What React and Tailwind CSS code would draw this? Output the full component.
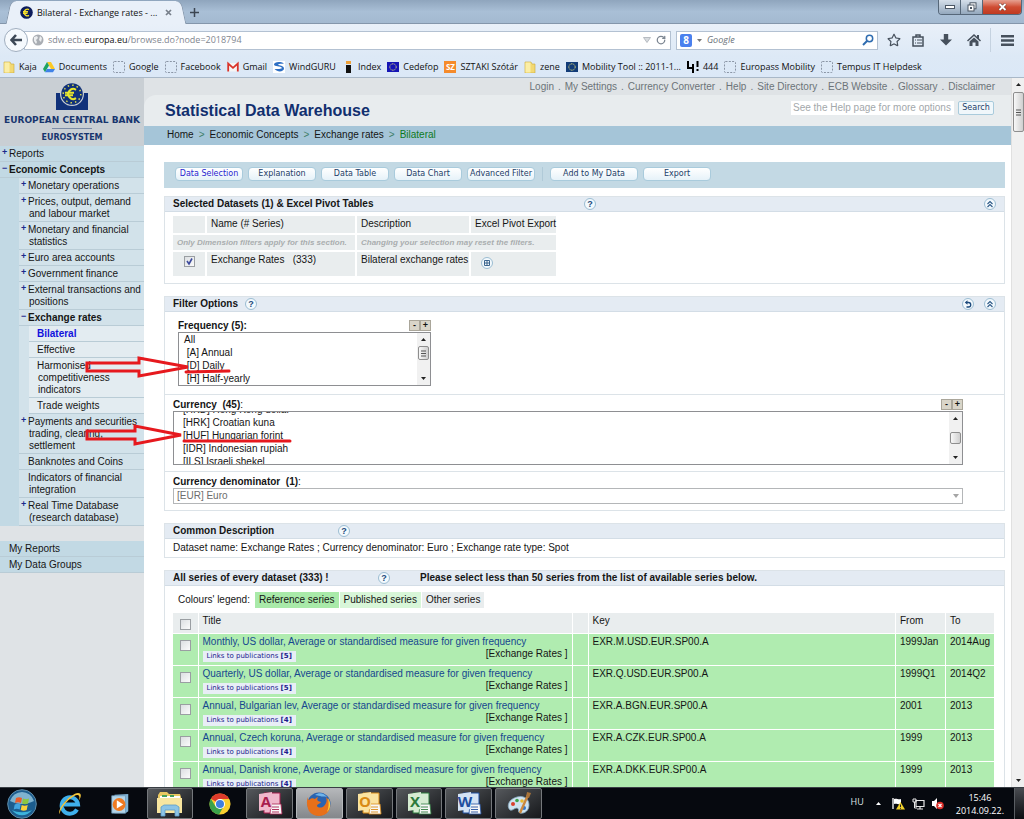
import { useEffect, useRef } from 'react'
import { FaRegStar } from 'react-icons/fa'
import { RotateCw } from 'lucide-react'

const topLinks = ['Login', 'My Settings', 'Currency Converter', 'Help', 'Site Directory', 'ECB Website', 'Glossary', 'Disclaimer']

const topics = [
  { sign: '+', lines: ['Monetary operations'] },
  { sign: '+', lines: ['Prices, output, demand', 'and labour market'] },
  { sign: '+', lines: ['Monetary and financial', 'statistics'] },
  { sign: '+', lines: ['Euro area accounts'] },
  { sign: '+', lines: ['Government finance'] },
  { sign: '+', lines: ['External transactions and', 'positions'] },
  {
    sign: '−',
    lines: ['Exchange rates'],
    open: true,
    children: [['Bilateral'], ['Effective'], ['Harmonised', 'competitiveness', 'indicators'], ['Trade weights']],
  },
  { sign: '+', lines: ['Payments and securities', 'trading, clearing,', 'settlement'] },
  { sign: '', lines: ['Banknotes and Coins'] },
  { sign: '', lines: ['Indicators of financial', 'integration'] },
  { sign: '+', lines: ['Real Time Database', '(research database)'] },
]

const series = [
  { title: 'Monthly, US dollar, Average or standardised measure for given frequency', links: 5, key: 'EXR.M.USD.EUR.SP00.A', from: '1999Jan', to: '2014Aug' },
  { title: 'Quarterly, US dollar, Average or standardised measure for given frequency', links: 5, key: 'EXR.Q.USD.EUR.SP00.A', from: '1999Q1', to: '2014Q2' },
  { title: 'Annual, Bulgarian lev, Average or standardised measure for given frequency', links: 4, key: 'EXR.A.BGN.EUR.SP00.A', from: '2001', to: '2013' },
  { title: 'Annual, Czech koruna, Average or standardised measure for given frequency', links: 4, key: 'EXR.A.CZK.EUR.SP00.A', from: '1999', to: '2013' },
  { title: 'Annual, Danish krone, Average or standardised measure for given frequency', links: 4, key: 'EXR.A.DKK.EUR.SP00.A', from: '1999', to: '2013' },
]

const frequencies = ['All', '\u00a0[A] Annual', '\u00a0[D] Daily', '\u00a0[H] Half-yearly', '\u00a0[M] Monthly', '\u00a0[Q] Quarterly']
const currencies = ['[HKD] Hong Kong dollar', '[HRK] Croatian kuna', '[HUF] Hungarian forint', '[IDR] Indonesian rupiah', '[ILS] Israeli shekel', '[INR] Indian rupee', '[ISK] Iceland krona']

/* ---------- browser chrome ---------- */

function FolderIcon() {
  return (
    <svg viewBox="0 0 12 12" className="size-3 shrink-0">
      <path d="M1 1h6l1 2h3v9H1z" fill="#f3d973" stroke="#c9a93b" strokeWidth=".6" />
      <path d="M1.5 1.5h5v10h-5z" fill="#fbeea6" />
    </svg>
  )
}

function BlankIcon() {
  return (
    <svg viewBox="0 0 12 12" className="size-3 shrink-0">
      <rect x=".5" y=".5" width="11" height="11" rx="1" fill="none" stroke="#8a95a5" strokeDasharray="2 1.3" />
    </svg>
  )
}

function DriveIcon() {
  return (
    <svg viewBox="0 0 12 12" className="size-3 shrink-0">
      <path d="M4 1h4l4 7H8z" fill="#fbc926" />
      <path d="M4 1 0 8l2 3.3L6 4.5z" fill="#1ea362" />
      <path d="M4 8h8l-2 3.3H2z" fill="#3f82e8" />
    </svg>
  )
}

function GmailIcon() {
  return (
    <svg viewBox="0 0 12 12" className="size-3 shrink-0">
      <path d="M1 2h10v8.5H1z" fill="#f5f5f5" />
      <path d="M1.2 10.5v-8L6 6.8l4.8-4.3v8" fill="none" stroke="#d9342b" strokeWidth="1.8" />
    </svg>
  )
}

function GuruIcon() {
  return (
    <svg viewBox="0 0 12 12" className="size-3 shrink-0">
      <path d="M0 0h12v12H0z" fill="#fff" />
      <path d="M11 2.5C7 0 1 1 1 3.6 1 6 8 5 9 7c0 1-5 1-7.500 1C5 12 11 10.500 11 7.500 11 4.500 6 5 5 3.600 6 2.600 9 3 11 2.500z" fill="#2d6fc4" />
    </svg>
  )
}

function IndexIcon() {
  return (
    <svg viewBox="0 0 12 12" className="size-3 shrink-0">
      <path d="M4 0h5v3H4z" fill="#f0a23a" />
      <path d="M4 4h5v8H4z" fill="#111" />
    </svg>
  )
}

function EuFlagIcon({ blue = '#1515b5' }) {
  return (
    <svg viewBox="0 0 12 12" className="size-3 shrink-0">
      <path d="M0 1h12v10H0z" fill={blue} />
      <circle cx="6" cy="6" r="3.200" fill="none" stroke="#e8e27a" strokeWidth="1" strokeDasharray="1 .7" />
    </svg>
  )
}

function SzIcon() {
  return <span className="flex size-3 shrink-0 items-center justify-center bg-[#f58b2c] text-[8px] leading-3 font-bold text-white">SZ</span>
}

function FourIcon() {
  return (
    <svg viewBox="0 0 12 12" className="size-3 shrink-0">
      <path d="M1 0v7h5M6 3v9M10.500 0v6M10.500 8v2" fill="none" stroke="#000" strokeWidth="2" />
    </svg>
  )
}

const bookmarks = [
  { icon: <FolderIcon />, label: 'Kaja' },
  { icon: <DriveIcon />, label: 'Documents' },
  { icon: <BlankIcon />, label: 'Google' },
  { icon: <BlankIcon />, label: 'Facebook' },
  { icon: <GmailIcon />, label: 'Gmail' },
  { icon: <GuruIcon />, label: 'WindGURU' },
  { icon: <IndexIcon />, label: 'Index' },
  { icon: <EuFlagIcon />, label: 'Cedefop' },
  { icon: <SzIcon />, label: 'SZTAKI Szótár' },
  { icon: <FolderIcon />, label: 'zene' },
  { icon: <EuFlagIcon blue="#123c78" />, label: 'Mobility Tool :: 2011-1...' },
  { icon: <FourIcon />, label: '444' },
  { icon: <BlankIcon />, label: 'Europass Mobility' },
  { icon: <BlankIcon />, label: 'Tempus IT Helpdesk' },
]

function TitleBar() {
  return (
    <div className="flex h-6 items-end justify-between bg-linear-to-b from-[#8fa5bd] via-[#a9bfd6] to-[#a3b9d0] border-b border-[#8496ab]">
      <div className="flex items-end">
        <div className="relative z-10 ml-3 -mb-px flex h-[23px] w-[168px] items-center gap-1 rounded-t-lg bg-[#e9f0f9] pl-2 before:absolute before:inset-y-0 before:-left-1 before:-z-10 before:w-6 before:-skew-x-12 before:rounded-tl-md before:border-l before:border-[#8496ab] before:bg-[#e9f0f9] after:absolute after:inset-y-0 after:-right-1 after:-z-10 after:w-6 after:skew-x-12 after:rounded-tr-md after:border-r after:border-[#8496ab] after:bg-[#e9f0f9]">
          <svg viewBox="0 0 13 13" className="size-[13px] shrink-0">
            <circle cx="6.500" cy="6.500" r="6.300" fill="#0c1c5c" />
            <path d="M9 3.600a3.300 3.300 0 1 0 0 5.800M3 5.700h5M3 7.400h4.500" fill="none" stroke="#f4de2c" strokeWidth="1.400" />
          </svg>
          <span className="flex-1 whitespace-nowrap text-[9px] text-[#111]">Bilateral - Exchange rates - ...</span>
          <button type="button" aria-label="Close tab" className="mr-2 size-[7px]">
            <svg viewBox="0 0 7 7" className="size-[7px]"><path d="M1 1l5 5M6 1 1 6" stroke="#777f8a" strokeWidth="1.700" /></svg>
          </button>
        </div>
        <button type="button" aria-label="New tab" className="mb-[6px] ml-[10px] size-[9px]">
          <svg viewBox="0 0 9 9" className="size-[9px]"><path d="M4.500 0v9M0 4.500h9" stroke="#3c4652" strokeWidth="1.500" /></svg>
        </button>
      </div>
      <div className="mr-[2px] flex h-[15px] self-start overflow-hidden rounded-b border border-t-0 border-[#566779]">
        <button type="button" aria-label="Minimize" className="flex w-[22px] items-center justify-center border-r border-[#566779] bg-linear-to-b from-[#d5dfea] to-[#94a8bd]">
          <svg viewBox="0 0 10 4" className="h-1 w-[10px]"><rect x=".5" y=".5" width="9" height="3" fill="#fff" stroke="#4a5664" /></svg>
        </button>
        <button type="button" aria-label="Restore" className="flex w-[22px] items-center justify-center border-r border-[#566779] bg-linear-to-b from-[#d5dfea] to-[#94a8bd]">
          <svg viewBox="0 0 10 10" className="size-[10px]">
            <rect x="3" y=".8" width="6" height="6" fill="#fff" stroke="#4a5664" />
            <rect x="1" y="3" width="6" height="6" fill="#fff" stroke="#4a5664" />
            <rect x="3" y="5" width="2" height="2" fill="#4a5664" />
          </svg>
        </button>
        <button type="button" aria-label="Close" className="flex w-[38px] items-center justify-center bg-linear-to-b from-[#e5a091] via-[#cf4c33] to-[#c03a20]">
          <svg viewBox="0 0 9 8" className="h-2 w-[9px]"><path d="M1.500 1l6 6M7.500 1l-6 6" stroke="#5b2a22" strokeWidth="3" /><path d="M1.500 1l6 6M7.500 1l-6 6" stroke="#fff" strokeWidth="2" /></svg>
        </button>
      </div>
    </div>
  )
}

function NavBar() {
  return (
    <div className="flex h-8 items-center bg-linear-to-b from-[#e9f0f9] to-[#dde9f6] pl-1">
      <button type="button" aria-label="Back" className="z-10 flex size-6 shrink-0 items-center justify-center rounded-full border border-[#a0aebf] bg-[#f5f9fd]">
        <svg viewBox="0 0 12 12" className="size-3"><path d="M6 1 1.500 6 6 11M2 6h10" fill="none" stroke="#3d4856" strokeWidth="2.600" /></svg>
      </button>
      <div className="-ml-1 flex h-[19px] flex-1 items-center border border-[#b3c1d2] bg-white pr-1 pl-[7px]">
        <svg viewBox="0 0 12 12" className="size-3 shrink-0">
          <circle cx="6" cy="6" r="5.500" fill="#a9adb3" />
          <path d="M2 3l3-1 1 2-2 2 1 2-1 2-2-3zM8 2l2 2-1 4-2-2z" fill="#eceef0" />
        </svg>
        <p className="ml-1 flex-1 text-[9px] text-[#7f868f]">sdw.ecb.<span className="text-[#111]">europa.eu</span>/browse.do?node=2018794</p>
        <svg viewBox="0 0 8 6" className="mr-[5px] h-[6px] w-2"><path d="M.5.500h7L4 5.500z" fill="#d8dce0" stroke="#a9afb6" strokeWidth=".8" /></svg>
        <RotateCw className="size-[10px] text-[#7b8591]" strokeWidth={3} />
      </div>
      <div className="ml-[5px] flex h-[19px] w-[202px] items-center border border-[#b3c1d2] bg-white px-[3px]">
        <span className="flex h-[13px] w-3 items-center justify-center rounded-xs bg-[#4a80ee] text-[10px] font-bold text-white">8</span>
        <svg viewBox="0 0 5 3" className="mx-[5px] h-[3px] w-[5px]"><path d="M0 0h5L2.500 3z" fill="#777" /></svg>
        <input aria-label="Search with Google" placeholder="Google" className="min-w-0 flex-1 text-[9px] italic placeholder:text-[#6c737b] outline-none" />
        <svg viewBox="0 0 12 12" className="size-3"><circle cx="7.500" cy="4.500" r="3.200" fill="none" stroke="#2f6cb0" strokeWidth="1.500" /><path d="M5 7 1 11" stroke="#2f6cb0" strokeWidth="2" /></svg>
      </div>
      <div className="flex items-center pl-[9px] text-[#46505c]">
        <FaRegStar className="size-[14px]" />
        <svg viewBox="0 0 12 13" className="ml-[11px] h-[13px] w-3">
          <path d="M1 3h10v9H1zM4 3V1h4v2" fill="none" stroke="currentColor" strokeWidth="1.500" />
          <path d="M3 6h1M5 6h5M3 9h1M5 9h5" stroke="currentColor" strokeWidth="1.200" />
        </svg>
        <svg viewBox="0 0 12 12" className="ml-4 size-3"><path d="M3.800 0h4.400v5.500H12l-6 6-6-6h3.800z" fill="currentColor" /></svg>
        <svg viewBox="0 0 14 12" className="ml-[15px] h-3 w-[14px]">
          <path d="M7 0 0 6.500l1 1L7 2l6 5.500 1-1-2-2V1h-2v1.700z" fill="currentColor" />
          <path d="M2.500 7.500 7 3.500l4.500 4V12h-3V8.500h-3V12h-3z" fill="currentColor" />
        </svg>
        <div className="ml-[9px] h-6 w-px bg-[#c5d2e0]" />
        <svg viewBox="0 0 13 11" className="mr-[10px] ml-[10px] h-[11px] w-[13px]"><path d="M0 1.300h13M0 5.500h13M0 9.700h13" stroke="currentColor" strokeWidth="2.400" /></svg>
      </div>
    </div>
  )
}

function BookmarkBar() {
  return (
    <nav className="flex h-[22px] items-center gap-[6px] border-b border-[#a9b8c8] bg-linear-to-b from-[#dde9f6] to-[#dbe8f7] pl-[3px]">
      {bookmarks.map((item) => (
        <a key={item.label} href="#" className="flex items-center gap-1 whitespace-nowrap text-[9px] text-[#111]">
          {item.icon}
          {item.label}
        </a>
      ))}
    </nav>
  )
}

/* ---------- page ---------- */

function EcbLogo() {
  return (
    <div className="flex h-[68px] flex-col items-center bg-[#c9cfd4] pt-1 font-['DejaVu_Sans'] text-[8px] text-[#17356e]">
      <svg viewBox="0 0 32 28" className="h-7 w-8 shrink-0">
        <path d="M0 11h32v17H0z" fill="#10317a" />
        <circle cx="16" cy="12" r="12" fill="#c9cfd4" />
        <circle cx="16" cy="12" r="10.800" fill="#10317a" />
        <circle cx="16" cy="12" r="8.800" fill="none" stroke="#dfe04a" strokeWidth="1.500" strokeDasharray="1.500 3.100" />
        <path d="M20 7.800a5 5 0 1 0 0 8.400M9 10.800h9M9 13.300h8" fill="none" stroke="#e6e62e" strokeWidth="2" />
      </svg>
      <p className="mt-1 whitespace-nowrap text-[9px] leading-3 font-bold">EUROPEAN CENTRAL BANK</p>
      <div className="mt-[2px] h-px w-10 shrink-0 bg-[#7b8ba6]" />
      <p className="mt-[3px] leading-3 font-bold">EUROSYSTEM</p>
    </div>
  )
}

function MenuLines({ lines }) {
  return (
    <>
      {lines.map((line, i) => (
        <span key={line} className={i ? 'block pl-px whitespace-nowrap' : 'block whitespace-nowrap'}>{line}</span>
      ))}
    </>
  )
}

function Sidebar() {
  const row = 'flex border-b border-[#b9ccd6] pt-[2px] pb-px leading-3'
  const sign = 'w-[9px] shrink-0 pl-[2px] text-[9px] leading-[9px] font-bold text-[#1c2a8c]'
  return (
    <aside className="w-36 shrink-0 bg-[#dfe3e6]">
      <EcbLogo />
      <nav className="bg-[#c2d9e4]">
        <a href="#" className={row}><span className={sign}>+</span>Reports</a>
        <a href="#" className={`${row} font-bold`}><span className={sign}>−</span>Economic Concepts</a>
        <ul className="ml-[19px] bg-[#d2e2ea]">
          {topics.map((topic) => (
            <li key={topic.lines[0]}>
              <a href="#" className={topic.open ? `${row} font-bold` : row}>
                <span className={sign}>{topic.sign}</span>
                <span><MenuLines lines={topic.lines} /></span>
              </a>
              {topic.children && (
                <ul className="ml-[10px] bg-[#e3ecf1]">
                  {topic.children.map((lines) => (
                    <li key={lines[0]}>
                      <a href="#" className={lines[0] === 'Bilateral' ? `${row} pl-2 font-bold text-[#1111dd]` : `${row} pl-2`}>
                        <span><MenuLines lines={lines} /></span>
                      </a>
                    </li>
                  ))}
                </ul>
              )}
            </li>
          ))}
        </ul>
      </nav>
      <nav className="mt-[15px] bg-[#c2d9e4]">
        <a href="#" className={`${row} pl-[9px]`}>My Reports</a>
        <a href="#" className={`${row} pl-[9px]`}>My Data Groups</a>
      </nav>
    </aside>
  )
}

function RoundButton({ label, children }) {
  return (
    <button type="button" aria-label={label} className="flex size-3 shrink-0 items-center justify-center rounded-full border border-[#9bbdd2] bg-[#f3f9fd] text-[9px] leading-none font-bold text-[#1c4a7c]">
      {children}
    </button>
  )
}

function Collapse() {
  return (
    <RoundButton label="Collapse">
      <svg viewBox="0 0 8 8" className="size-2"><path d="M1.500 4 4 1.500 6.500 4M1.500 7 4 4.500 6.500 7" fill="none" stroke="#2a5785" strokeWidth="1.100" /></svg>
    </RoundButton>
  )
}

function PillButton({ children, active, wide }) {
  return (
    <button
      type="button"
      className={`h-[14px] rounded border border-[#a9cbdc] bg-linear-to-b from-white to-[#e6f2f9] text-center font-['DejaVu_Sans'] text-[8px] whitespace-nowrap ${wide ? 'w-[88px]' : 'w-[68px]'} ${active ? 'text-[#2a1fd0]' : 'text-[#1d4068]'}`}
    >
      {children}
    </button>
  )
}

function PlusMinus() {
  const button = 'h-[11px] w-[11px] border border-[#aaa69a] bg-[#d9d5c9] text-center text-[9px] leading-[9px] font-bold'
  return (
    <div className="flex">
      <button type="button" aria-label="Smaller" className={button}>-</button>
      <button type="button" aria-label="Larger" className={button}>+</button>
    </div>
  )
}

function ListBox({ id, options, scroll = 0, grip, indent }) {
  const ref = useRef(null)
  useEffect(() => {
    ref.current.scrollTop = scroll
  }, [scroll])
  return (
    <div className="flex h-[54px] border border-[#8e8f92] bg-white">
      <select
        ref={ref}
        id={id}
        multiple
        className="h-full min-w-0 flex-1 appearance-none overflow-y-scroll p-0 pt-px text-[10px] outline-none [scrollbar-width:none]"
      >
        {options.map((option) => (
          <option key={option} className={`h-[13px] min-h-0 py-0 leading-[13px] ${indent}`}>{option}</option>
        ))}
      </select>
      <div className="flex w-[13px] flex-col items-center justify-between bg-[#f1f1f1] py-[5px]">
        <svg viewBox="0 0 5 3" className="h-[3px] w-[5px]"><path d="M0 3h5L2.500 0z" fill="#222" /></svg>
        <div className={`flex w-[11px] items-center justify-center rounded-xs border border-[#8e8e8e] bg-linear-to-r from-[#f8f8f8] to-[#cfcfcf] ${grip ? 'mb-3 h-[14px]' : 'h-3'}`}>
          {grip && <svg viewBox="0 0 5 7" className="h-[7px] w-[5px]"><path d="M0 1h5M0 3.500h5M0 6h5" stroke="#555" strokeWidth="1" /></svg>}
        </div>
        <svg viewBox="0 0 5 3" className="h-[3px] w-[5px]"><path d="M0 0h5L2.500 3z" fill="#222" /></svg>
      </div>
    </div>
  )
}

function Panel({ title, children }) {
  return (
    <section className="border border-[#dce3e8] bg-white">
      <div className="flex h-[15px] items-center border-b border-[#d3dde6] bg-[#e4ebf3] px-2 font-bold">{title}</div>
      {children}
    </section>
  )
}

function PivotTable() {
  const cell = 'border-r-2 border-b-2 border-white bg-[#e9edee] px-1 text-left align-top font-normal'
  return (
    <table className="mt-1 mb-[5px] ml-2 w-[384px] table-fixed border-collapse leading-3">
      <colgroup>
        <col className="w-[33px]" />
        <col className="w-[150px]" />
        <col className="w-[114px]" />
        <col className="w-[87px]" />
      </colgroup>
      <thead>
        <tr className="h-[18px]">
          <th className={cell}></th>
          <th className={`${cell} pt-[2px]`}>Name (# Series)</th>
          <th className={`${cell} pt-[2px]`}>Description</th>
          <th className={`${cell} pt-[2px] whitespace-nowrap`}>Excel Pivot Export</th>
        </tr>
      </thead>
      <tbody>
        <tr className="h-[17px] text-[8px] font-bold text-[#a9adaf] italic">
          <td colSpan={2} className={`${cell} pt-[2px] whitespace-nowrap`}><b>Only Dimension filters apply for this section.</b></td>
          <td colSpan={2} className={`${cell} pt-[2px] whitespace-nowrap`}><b>Changing your selection may reset the filters.</b></td>
        </tr>
        <tr className="h-[26px]">
          <td className={cell}>
            <Tick label="Exchange Rates" checked />
          </td>
          <td className={`${cell} pt-[2px]`}>Exchange Rates &nbsp; (333)</td>
          <td className={`${cell} pt-[2px] whitespace-nowrap`}>Bilateral exchange rates</td>
          <td className={`${cell} pt-[5px] pl-[10px]`}>
            <RoundButton label="Excel pivot export">
              <svg viewBox="0 0 6 6" className="size-[6px]"><path d="M.5.500h5v5h-5zM3 .5v5M.5 3h5" fill="none" stroke="#2a5785" strokeWidth=".9" /></svg>
            </RoundButton>
          </td>
        </tr>
      </tbody>
    </table>
  )
}

function Tick({ label, checked }) {
  return (
    <span className="relative mx-auto mt-1 block size-[11px]">
      <input
        type="checkbox"
        aria-label={label}
        defaultChecked={checked}
        className="peer block size-[11px] appearance-none border border-[#9a9ea2] bg-linear-to-br from-[#dcdfe2] to-[#fbfbfb]"
      />
      <svg viewBox="0 0 11 11" className="pointer-events-none absolute inset-0 hidden size-[11px] peer-checked:block">
        <path d="M3 5l2 3 3-5.500" fill="none" stroke="#3c4a9c" strokeWidth="1.600" />
      </svg>
    </span>
  )
}

function SeriesTable() {
  const head = 'border-r border-b border-white bg-[#e9edee] px-1 py-[2px] text-left align-top font-normal'
  const cell = 'border-r border-b border-white bg-[#b0ecb0] px-1 py-[2px] align-top'
  return (
    <table className="w-full table-fixed border-collapse leading-3">
      <colgroup>
        <col className="w-[25px]" />
        <col className="w-[374px]" />
        <col className="w-4" />
        <col />
        <col className="w-[50px]" />
        <col className="w-[49px]" />
      </colgroup>
      <thead>
        <tr className="h-5">
          <th className={`${head} py-0`}><Tick label="Select all series" /></th>
          <th className={head}>Title</th>
          <th className={head}></th>
          <th className={head}>Key</th>
          <th className={head}>From</th>
          <th className={head}>To</th>
        </tr>
      </thead>
      <tbody>
        {series.map((item) => (
          <tr key={item.key} className="h-8">
            <td className={`${cell} py-0`}><Tick label={item.title} /></td>
            <td className={cell}>
              <a href="#" className="block whitespace-nowrap text-[#15478f]">{item.title}</a>
              <div className="flex justify-between">
                <a href="#" className="mt-[3px] h-[11px] bg-[#e8eef6] px-1 font-['DejaVu_Sans'] text-[7px] leading-[11px] text-[#1a1a8c]">
                  Links to publications <b>[{item.links}]</b>
                </a>
                <span>[Exchange Rates ]</span>
              </div>
            </td>
            <td className={cell}></td>
            <td className={cell}>{item.key}</td>
            <td className={cell}>{item.from}</td>
            <td className={cell}>{item.to}</td>
          </tr>
        ))}
      </tbody>
    </table>
  )
}

function PageHeader() {
  return (
    <header className="bg-[#dfe3e6]">
      <nav className="flex h-[17px] items-center justify-end gap-1 pr-4 text-[#6c7378]">
        {topLinks.map((link, i) => (
          <span key={link} className="flex gap-1">
            {i > 0 && <span>.</span>}
            <a href="#">{link}</a>
          </span>
        ))}
      </nav>
      <div className="flex h-[31px] items-center justify-between rounded-tl-xl bg-[#e8ecee] pr-[17px] pl-[21px]">
        <h1 className="text-[16px] font-bold text-[#112f6f]">Statistical Data Warehouse</h1>
        <form className="mb-[6px] flex items-center gap-1">
          <input aria-label="Search" placeholder="See the Help page for more options" className="h-[14px] w-[163px] bg-white px-[2px] text-[10px] placeholder:text-[#a3a8ab]" />
          <button type="button" className="h-[14px] w-9 rounded-xs border border-[#a9cbdc] bg-[#f0f7fb] font-['DejaVu_Sans'] text-[8px] text-[#1d4068]">Search</button>
        </form>
      </div>
      <nav className="flex h-[19px] items-center gap-[5px] bg-[#a5c5d8] pb-[2px] pl-[23px]">
        <a href="#">Home</a>
        <span className="text-[#3f7f6a]">&gt;</span>
        <a href="#">Economic Concepts</a>
        <span className="text-[#3f7f6a]">&gt;</span>
        <a href="#">Exchange rates</a>
        <span className="text-[#3f7f6a]">&gt;</span>
        <a href="#" className="text-[#0c7a1c]">Bilateral</a>
      </nav>
    </header>
  )
}

function Content() {
  return (
    <div className="flex min-h-0 flex-col pt-[17px] pr-[6px] pl-5">
      <div className="flex h-[26px] items-start gap-[5px] bg-[#c3d9e4] pt-[5px] pl-[11px]">
        <PillButton active>Data Selection</PillButton>
        <PillButton>Explanation</PillButton>
        <PillButton>Data Table</PillButton>
        <PillButton>Data Chart</PillButton>
        <PillButton>Advanced Filter</PillButton>
        <span className="mx-[2px] h-[14px] w-px bg-[#b0cad8]" />
        <PillButton wide>Add to My Data</PillButton>
        <PillButton>Export</PillButton>
      </div>

      <div className="mt-2 flex flex-col gap-3">
        <Panel
          title={
            <>
              <span className="w-[411px]">Selected Datasets (1) &amp; Excel Pivot Tables</span>
              <RoundButton label="Help">?</RoundButton>
              <span className="flex-1" />
              <Collapse />
            </>
          }
        >
          <PivotTable />
        </Panel>

        <Panel
          title={
            <>
              <span className="mr-[7px]">Filter Options</span>
              <RoundButton label="Help">?</RoundButton>
              <span className="flex-1" />
              <span className="mr-[10px]">
                <RoundButton label="Reset">
                  <svg viewBox="0 0 8 8" className="size-2"><path d="M2 2.500h2.500a2.200 2.200 0 0 1 0 4.500H2.500" fill="none" stroke="#1c4a7c" strokeWidth="1.300" /><path d="M3.500.300v4.400L.8 2.500z" fill="#1c4a7c" /></svg>
                </RoundButton>
              </span>
              <Collapse />
            </>
          }
        >
          <div className="w-[266px] pt-2 pb-2 pl-[13px]">
            <div className="flex h-3 items-start justify-between">
              <label htmlFor="frequency" className="font-bold">Frequency (5):</label>
              <PlusMinus />
            </div>
            <ListBox id="frequency" options={frequencies} grip indent="pl-[5px]" />
          </div>
          <div className="border-t border-[#dce3e8] pt-1 pb-[6px]">
            <div className="mr-[41px] ml-2">
              <div className="flex h-3 items-start justify-between">
                <label htmlFor="currency" className="font-bold">Currency &nbsp;(45)<span className="font-normal">:</span></label>
                <PlusMinus />
              </div>
              <ListBox id="currency" options={currencies} scroll={9} indent="pl-[9px]" />
            </div>
          </div>
          <div className="border-t border-[#dce3e8] pt-1 pb-[6px]">
            <div className="mr-[41px] ml-2">
              <label htmlFor="denominator" className="block leading-3 font-bold">Currency denominator &nbsp;(1)<span className="font-normal">:</span></label>
              <div className="relative">
                <select id="denominator" disabled className="block h-4 w-full appearance-none border border-[#b4b6b8] bg-white pl-[3px] text-[10px] leading-[14px] text-[#6d6d6d] opacity-100">
                  <option>[EUR] Euro</option>
                </select>
                <svg viewBox="0 0 6 4" className="pointer-events-none absolute top-[6px] right-1 h-1 w-[6px]"><path d="M0 0h6L3 4z" fill="#a5a5a5" /></svg>
              </div>
            </div>
          </div>
        </Panel>

        <Panel
          title={
            <>
              <span className="w-[165px]">Common Description</span>
              <RoundButton label="Help">?</RoundButton>
            </>
          }
        >
          <p className="px-2 py-[3px] leading-3">Dataset name: Exchange Rates ; Currency denominator: Euro ; Exchange rate type: Spot</p>
        </Panel>

        <Panel
          title={
            <>
              <span className="w-[205px]">All series of every dataset (333) !</span>
              <RoundButton label="Help">?</RoundButton>
              <span className="ml-[30px]">Please select less than 50 series from the list of available series below.</span>
            </>
          }
        >
          <div className="mt-[6px] mb-[5px] flex h-4 items-center gap-px pl-[13px]">
            <span className="mr-1">Colours' legend:</span>
            <span className="bg-[#a9eaa9] px-1 leading-4">Reference series</span>
            <span className="bg-[#d8f6d8] px-1 leading-4">Published series</span>
            <span className="bg-[#e9edee] px-1 leading-4">Other series</span>
          </div>
          <div className="pr-[9px] pl-2">
            <SeriesTable />
          </div>
        </Panel>
      </div>
    </div>
  )
}

function PageScrollbar() {
  return (
    <div className="flex w-[13px] shrink-0 flex-col items-center border-l border-[#e0e0e0] bg-[#f0f0f0] py-[5px]">
      <svg viewBox="0 0 5 3" className="h-[3px] w-[5px]"><path d="M0 3h5L2.500 0z" fill="#222" /></svg>
      <div className="mt-[6px] flex h-10 w-[11px] items-center justify-center rounded-xs border border-[#8e8e8e] bg-linear-to-r from-[#f8f8f8] to-[#cfcfcf]">
        <svg viewBox="0 0 5 7" className="h-[7px] w-[5px]"><path d="M0 1h5M0 3.500h5M0 6h5" stroke="#555" strokeWidth="1" /></svg>
      </div>
      <div className="flex-1" />
      <svg viewBox="0 0 5 3" className="h-[3px] w-[5px]"><path d="M0 0h5L2.500 3z" fill="#222" /></svg>
    </div>
  )
}

// red pen marks over the page
function Annotations() {
  return (
    <svg viewBox="0 0 320 400" className="pointer-events-none absolute top-0 left-0 h-[400px] w-80" fill="none" stroke="#e6191e" strokeWidth="3">
      <path d="M87 285h52v-5l49 9-49 9v-5H87z" />
      <path d="M186 294l43-1" strokeLinecap="round" />
      <path d="M87 353h48v-5l46 9-46 9v-5H87z" />
      <path d="M184 363h106" strokeLinecap="round" />
    </svg>
  )
}

/* ---------- taskbar ---------- */

function OfficeIcon({ letter, color, light }) {
  return (
    <svg viewBox="0 0 26 26" className="size-[26px]">
      <path d="M7 2h16v20H7z" fill={light} stroke={color} strokeWidth="1" />
      <path d="M14 13h10l1 10H13z" fill="#f7f7f7" stroke={color} strokeWidth=".8" />
      <path d="M15 16h7M15 18.500h7M15 21h7" stroke={color} strokeWidth=".9" />
      <path d="M2 3l13-2v17L2 20z" fill={light} />
      <text x="9" y="16" textAnchor="middle" fontSize="15" fontWeight="bold" fill={color} fontFamily="Open Sans, sans-serif">{letter}</text>
    </svg>
  )
}

function ExplorerIcon() {
  return (
    <svg viewBox="0 0 28 26" className="h-[26px] w-7">
      <path d="M2 4l2-3h7l2 2h11l1 3v16H2z" fill="#e9c862" />
      <path d="M4 5h20v4H4z" fill="#fff" />
      <path d="M6 5h5M14 5h4" stroke="#46a05a" strokeWidth="2" />
      <path d="M1 7h25v15H1z" fill="#f8e6a0" />
      <path d="M5 25v-9l3-2h12l3 2v9h-4v-6H9v6z" fill="#8cc4e6" stroke="#5a9cc8" strokeWidth=".8" />
    </svg>
  )
}

function ChromeIcon() {
  return (
    <svg viewBox="0 0 24 24" className="size-[22px]">
      <circle cx="12" cy="12" r="11.500" fill="#f9cf2f" />
      <path d="M12 12 2 6.300A11.500 11.500 0 0 1 22 6.500H12z" fill="#dd3b2b" />
      <path d="M2 6.300A11.500 11.500 0 0 0 11 23.500l5-9-4-2.500-5 2.500z" fill="#3ba24b" />
      <circle cx="12" cy="12" r="5.500" fill="#fff" />
      <circle cx="12" cy="12" r="4.400" fill="#3f7fe0" />
    </svg>
  )
}

function FirefoxIcon() {
  return (
    <svg viewBox="0 0 26 26" className="size-[26px]">
      <circle cx="13" cy="13" r="11.500" fill="#2a63b0" />
      <path d="M9 4c4-3 9-2 12 2-3-1-5 0-7-1z" fill="#6fb4ea" />
      <path d="M2 6c0 2 0 3 1 3 2-2 4-2 6-1 1-1 2-2 3-2-1 2-1 3 0 4l3 1c-1 2-4 2-4 4 1 2 5 2 7 0 3-3 3-6 2-9 4 3 6 10 2 15-5 6-15 5-19-1C1 16 0 10 2 6z" fill="#e8701a" />
      <path d="M22 7c3 5 3 10-1 14 2-5 2-9 1-14z" fill="#f9d235" />
    </svg>
  )
}

function PaintIcon() {
  return (
    <svg viewBox="0 0 26 26" className="size-[26px]">
      <path d="M11 6c7-2 12 2 12 8s-5 9-9 8c-3-1 0-4-3-5-3 0-4 3-7 2C0 15 3 8 11 6z" fill="#cfe3f0" stroke="#86a9c0" strokeWidth=".8" />
      <circle cx="7" cy="13" r="2" fill="#d9402e" />
      <circle cx="11" cy="9.500" r="1.800" fill="#3fa34d" />
      <circle cx="16" cy="10" r="1.800" fill="#e9b92b" />
      <circle cx="18" cy="17" r="2" fill="#3477c9" />
      <path d="M22 4 14 22" stroke="#c9873e" strokeWidth="2.400" />
      <path d="M21 1l4 1-2 5-3-1z" fill="#a8743a" />
    </svg>
  )
}

function IeIcon() {
  return (
    <svg viewBox="0 0 26 26" className="size-[26px]">
      <path d="M20 18.500a8.200 8.200 0 1 1 1-5H7" fill="none" stroke="#3fb0ec" strokeWidth="4" />
      <path d="M3 23C-1 20 12 3 21 2c5 0 2 6 1 7 1-4 0-5-2-5C13 5 2 19 3 23z" fill="#f5c63a" />
    </svg>
  )
}

function PlayerIcon() {
  return (
    <svg viewBox="0 0 24 24" className="size-[22px]">
      <path d="M6 2l15-1v19l-3 2H6z" fill="#7fb2d4" />
      <path d="M3 3h15v19H3z" fill="#b4d4e8" stroke="#6b98b8" strokeWidth=".8" />
      <circle cx="11" cy="12.500" r="7" fill="#ee7a22" />
      <path d="M8.500 8v9l7-4.500z" fill="#fff" />
    </svg>
  )
}

const tasks = [
  { name: 'Internet Explorer', icon: <IeIcon /> },
  { name: 'Media Player', icon: <PlayerIcon /> },
  { name: 'Explorer', icon: <ExplorerIcon />, open: true },
  { name: 'Chrome', icon: <ChromeIcon /> },
  { name: 'Access', icon: <OfficeIcon letter="A" color="#a81e4e" light="#f0b8cc" />, open: true },
  { name: 'Firefox', icon: <FirefoxIcon />, open: true, active: true },
  { name: 'Outlook', icon: <OfficeIcon letter="O" color="#d98a14" light="#fbe3a0" />, open: true },
  { name: 'Excel', icon: <OfficeIcon letter="X" color="#2c7a3c" light="#d5ecd2" />, open: true },
  { name: 'Word', icon: <OfficeIcon letter="W" color="#1f4f9e" light="#d3e3f5" />, open: true },
  { name: 'Paint', icon: <PaintIcon />, open: true },
]

function taskClass(task) {
  const base = 'flex items-center justify-center rounded-xs border'
  if (task.active) return `${base} border-[#b5b8bb] bg-linear-to-b from-[#b5b7ba] to-[#84878b]`
  if (task.open) return `${base} border-[#75787c] bg-linear-to-br from-[#55585c] to-[#17191c]`
  return `${base} border-transparent`
}

function Taskbar() {
  return (
    <footer className="flex h-8 shrink-0 items-stretch border-t border-[#3a3f45] bg-[#06090f] text-white">
      <button type="button" aria-label="Start" className="flex w-[43px] items-center justify-center">
        <svg viewBox="0 0 30 30" className="size-[30px]">
          <circle cx="15" cy="15" r="14.300" fill="#1c5d8e" stroke="#5f8ca8" strokeWidth="1" />
          <path d="M3 12a12.500 12.500 0 0 1 24 0c-8 4-16 4-24 0z" fill="#7fb3cf" />
          <path d="M5 21c5 7 15 7 20 0-5 3-15 3-20 0z" fill="#3cb4dc" />
          <path d="M9 9c2-1 4-1 6 0l-1 5c-2-1-4-1-6 0z" fill="#ea5b2a" />
          <path d="M16 9.500c2 1 4 1 6 0l-1 5c-2 1-4 1-6 0z" fill="#8cc63f" />
          <path d="M7.700 15.500c2-1 4-1 6 0l-1 5c-2-1-4-1-6 0z" fill="#42a5e0" />
          <path d="M14.700 16c2 1 4 1 6 0l-1 5c-2 1-4 1-6 0z" fill="#fbd038" />
        </svg>
      </button>
      <div className="ml-1 grid w-[495px] grid-cols-10 gap-[3px]">
        {tasks.map((task) => (
          <button key={task.name} type="button" aria-label={task.name} className={taskClass(task)}>
            {task.icon}
          </button>
        ))}
      </div>
      <div className="ml-auto flex items-center">
        <span className="mr-3 mb-1 text-[9px] text-[#dfe3e6]">HU</span>
        <svg viewBox="0 0 5 3" className="mr-[11px] h-[3px] w-[5px]"><path d="M0 3h5L2.500 0z" fill="#fff" /></svg>
        <svg viewBox="0 0 13 13" className="mr-[7px] size-[13px]">
          <path d="M1 1v11" stroke="#fff" strokeWidth="1.300" />
          <path d="M2 2c3-1 4 1 7 0v5c-3 1-4-1-7 0z" fill="#fff" />
          <path d="M8.500 5 13 12.500H4z" fill="#f0d028" />
          <path d="M8.500 7.500v2.500M8.500 10.800v1" stroke="#222" strokeWidth="1" />
        </svg>
        <svg viewBox="0 0 13 12" className="mr-[6px] h-3 w-[13px]">
          <path d="M4 2.500h8v6H4zM5 11h6M8 9v2" fill="none" stroke="#e8e8e8" strokeWidth="1.200" />
          <path d="M1 1h3v3H1zM2.500 4v6H5" fill="none" stroke="#e8e8e8" strokeWidth="1" />
        </svg>
        <svg viewBox="0 0 13 13" className="mr-3 size-[13px]">
          <path d="M1 4h2l3-3v11L3 9H1z" fill="#fff" />
          <circle cx="9" cy="8.500" r="3.800" fill="#dc2f2a" />
          <path d="M7.500 7l3 3M10.500 7l-3 3" stroke="#fff" strokeWidth="1.200" />
        </svg>
        <div className="text-center text-[9px] leading-[13px]">
          <p>15:46</p>
          <p>2014.09.22.</p>
        </div>
        <div className="ml-[10px] h-full w-[10px] border-l border-[#5a5e63] bg-linear-to-b from-[#4a4d52] to-[#0c0e12]" />
      </div>
    </footer>
  )
}

export default function App() {
  return (
    <div className="flex h-screen flex-col overflow-hidden bg-white font-['Open_Sans',sans-serif]">
      <div className="shrink-0">
        <TitleBar />
        <NavBar />
        <BookmarkBar />
      </div>
      <div className="relative flex min-h-0 flex-1 overflow-hidden font-['Liberation_Sans',sans-serif] text-[10px] leading-3 text-[#151515]">
        <Sidebar />
        <main className="min-w-0 flex-1">
          <PageHeader />
          <Content />
        </main>
        <PageScrollbar />
        <Annotations />
      </div>
      <Taskbar />
    </div>
  )
}
